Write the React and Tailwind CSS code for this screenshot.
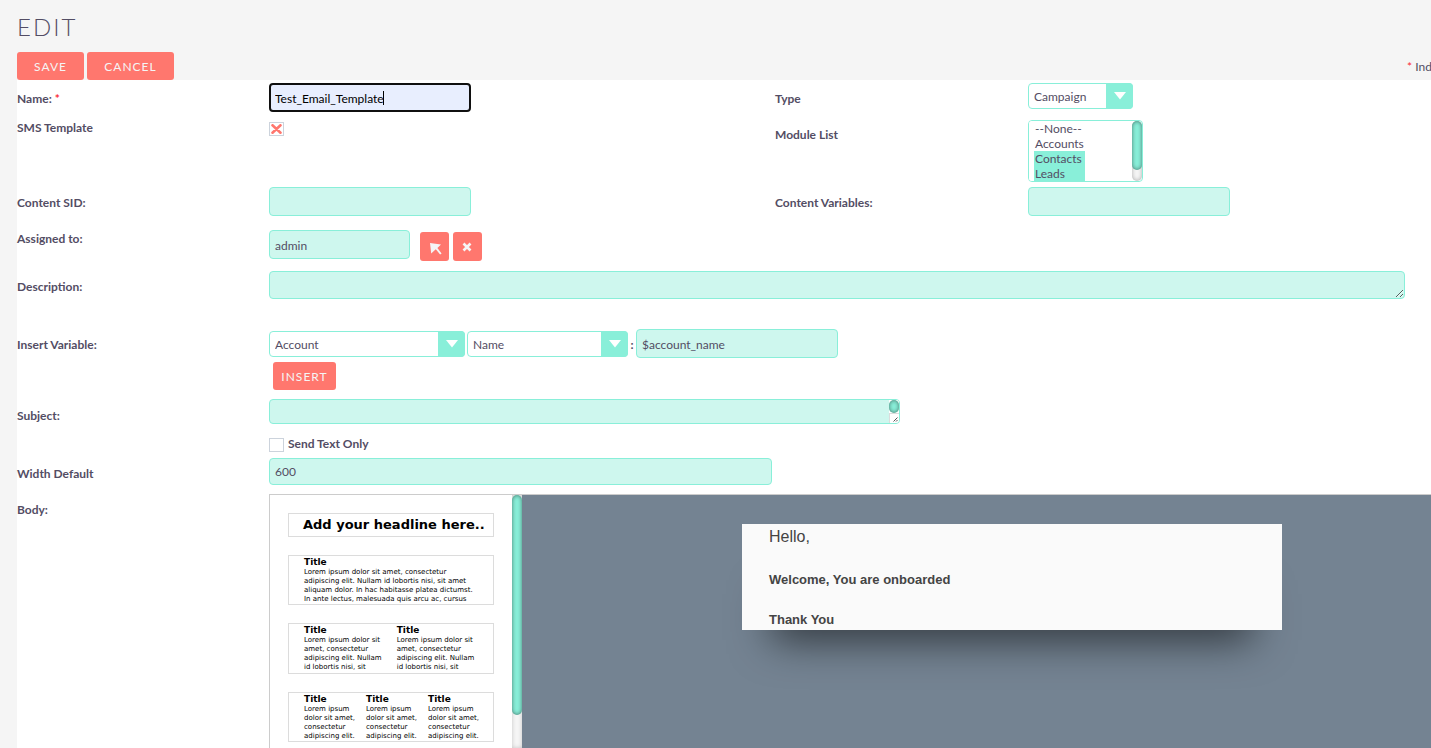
import { useState } from 'react'

const font = "font-['Lato','Liberation_Sans',sans-serif]"
const fieldBase = 'block rounded-[4px] border border-[#89efd9] bg-[#cef7ee] px-[5px] text-xs text-[#534d64] outline-none'
const textField = `${fieldBase} h-[29px] pt-[2px]`

const lorem = {
  one: [
    'Lorem ipsum dolor sit amet, consectetur',
    'adipiscing elit. Nullam id lobortis nisi, sit amet',
    'aliquam dolor. In hac habitasse platea dictumst.',
    'In ante lectus, malesuada quis arcu ac, cursus',
  ],
  two: ['Lorem ipsum dolor sit', 'amet, consectetur', 'adipiscing elit. Nullam', 'id lobortis nisi, sit'],
  three: ['Lorem ipsum', 'dolor sit amet,', 'consectetur', 'adipiscing elit.'],
}

/* ── Form helpers ── */
function Label({ htmlFor, children, className = 'pt-[9px]' }) {
  return (
    <label htmlFor={htmlFor} className={`w-[252px] shrink-0 text-xs leading-5 font-bold ${className}`}>
      {children}
    </label>
  )
}

function Arrow() {
  return (
    <span className="pointer-events-none absolute inset-y-0 right-0 flex w-[27px] justify-center rounded-r-[4px] bg-[#89efd9] pt-[9px]">
      <svg width="12" height="8" viewBox="0 0 12 8" fill="#fff">
        <path d="M0 0h12L6 7.5z" />
      </svg>
    </span>
  )
}

function Select({ id, label, options, className }) {
  return (
    <div className={`relative self-start ${className}`}>
      <select
        id={id}
        aria-label={label}
        className="block h-[26px] w-full appearance-none rounded-[4px] border border-[#89efd9] bg-white pt-[2px] pr-7 pl-[5px] text-xs text-[#534d64] outline-none"
      >
        {options.map(o => <option key={o}>{o}</option>)}
      </select>
      <Arrow />
    </div>
  )
}

function Button({ children, className }) {
  return (
    <button
      type="button"
      className={`h-7 rounded-[3px] bg-[#ff776e] pt-[2px] text-xs tracking-[1px] text-[#f5f5f5] ${className}`}
    >
      {children}
    </button>
  )
}

function Thumb({ className }) {
  return (
    <div className={`rounded-full bg-[#89efd9] shadow-[inset_0_0_4px_rgba(0,0,0,0.5)] ${className}`} />
  )
}

/* ── Body editor ── */
function Block({ columns, lines, className }) {
  return (
    <div className={`flex shrink-0 border border-[#dcdcdc] pl-[15px] ${className}`}>
      {Array.from({ length: columns }, (_, i) => (
        <div key={i} className="whitespace-nowrap">
          <p className="pt-px text-[9px] leading-[11px] font-bold">Title</p>
          {lines.map(l => <p key={l} className="text-[7px] leading-[9px]">{l}</p>)}
        </div>
      ))}
    </div>
  )
}

function Editor() {
  return (
    <div className="flex min-w-0 flex-1 border-t border-l border-[#cccccc]">
      <div className="flex w-[242px] shrink-0 flex-col gap-[18px] overflow-hidden px-[18px] pt-[18px] font-['DejaVu_Sans',sans-serif] text-black">
        <div className="h-6 shrink-0 border border-[#dcdcdc] pl-[14px] text-[13px] leading-[22px] font-bold whitespace-nowrap">
          Add your headline here..
        </div>
        <Block columns={1} lines={lorem.one} className="h-[50px]" />
        <Block columns={2} lines={lorem.two} className="h-[51px] gap-[15px]" />
        <Block columns={3} lines={lorem.three} className="h-[50px] gap-[11px]" />
      </div>
      <div className="w-[10px] shrink-0 bg-[#f5f5f5] shadow-[inset_0_0_4px_rgba(0,0,0,0.2)]">
        <Thumb className="h-[220px]" />
      </div>
      <div className="flex flex-1 items-start justify-center bg-[#748392] pt-[29px] pl-[71px]">
        <div className="w-[540px] bg-[#fafafa] pl-[27px] font-['Liberation_Sans',Arial,sans-serif] text-[#444] shadow-[0_40px_42px_-30px_rgba(0,0,0,0.6)]">
          <p className="pt-px text-base leading-6">Hello,</p>
          <p className="pt-[21px] text-[13px] leading-5 font-bold">Welcome, You are onboarded</p>
          <p className="pt-5 text-[13px] leading-5 font-bold">Thank You</p>
        </div>
      </div>
    </div>
  )
}

export default function App() {
  const [name, setName] = useState('Test_Email_Template')
  const [sms, setSms] = useState(true)
  const [modules, setModules] = useState(['Contacts', 'Leads'])

  return (
    <div className={`flex h-screen flex-col overflow-hidden bg-[#f5f5f5] pl-[17px] text-[#534d64] ${font}`}>
      {/* Title and actions */}
      <header className="h-20 shrink-0">
        <h1 className="pt-[11px] text-2xl leading-8 font-light tracking-[2px]">EDIT</h1>
        <div className="flex items-center gap-[3px] pt-[9px]">
          <Button className="w-[67px]">SAVE</Button>
          <Button className="w-[87px]">CANCEL</Button>
          <p className="ml-auto w-6 overflow-hidden pt-[2px] text-xs whitespace-nowrap">
            <span className="text-red-500">*</span> Indicates required field
          </p>
        </div>
      </header>

      <form className="flex flex-1 flex-col bg-white">
        <div className="flex h-9 shrink-0">
          <div className="flex w-[758px]">
            <Label htmlFor="name">Name: <span className="text-red-500">*</span></Label>
            <div className="relative mt-[3px] h-[29px]">
              <input
                id="name"
                value={name}
                onChange={e => setName(e.target.value)}
                className="block h-[29px] w-[202px] rounded-[4px] border-2 border-[#101010] bg-[#e8eefe] px-1 pt-[2px] text-xs text-black outline-none"
              />
              <span className="absolute top-[8px] left-[114px] h-[14px] w-px bg-black" />
            </div>
          </div>
          <Label htmlFor="type">Type</Label>
          <Select id="type" options={['Campaign', 'Email', 'System']} className="mt-[3px] ml-px w-[105px]" />
        </div>

        <div className="flex h-[68px] shrink-0">
          <div className="flex w-[758px]">
            <Label htmlFor="sms" className="pt-[2px]">SMS Template</Label>
            <div className="relative mt-[6px] h-[14px] w-[15px]">
              <input
                id="sms"
                type="checkbox"
                checked={sms}
                onChange={() => setSms(!sms)}
                className="block h-[14px] w-[15px] appearance-none border border-[#ccd3dc] bg-white"
              />
              {sms && (
                <svg className="pointer-events-none absolute top-[2px] left-[2px]" width="11" height="10" viewBox="0 0 11 10" stroke="#ff776e" strokeWidth="2.6" strokeLinecap="round">
                  <path d="M1.5 1.3l8 7.4M9.5 1.3l-8 7.4" />
                </svg>
              )}
            </div>
          </div>
          <Label htmlFor="modules">Module List</Label>
          <div className="mt-1 ml-px flex h-[62px] w-[115px] overflow-hidden rounded-[4px] border border-[#89efd9]">
            <select
              id="modules"
              multiple
              size={4}
              value={modules}
              onChange={e => setModules([...e.target.selectedOptions].map(o => o.value))}
              className="h-[60px] w-[103px] appearance-none overflow-hidden bg-white pr-[47px] pl-[5px] text-xs text-[#534d64] outline-none"
            >
              {['--None--', 'Accounts', 'Contacts', 'Leads'].map(o => (
                <option
                  key={o}
                  className="h-[15px] px-px py-0 leading-[15px] [-webkit-text-fill-color:#534d64] checked:bg-[#89efd9] checked:bg-[linear-gradient(#89efd9,#89efd9)]"
                >
                  {o}
                </option>
              ))}
            </select>
            <div className="w-[10px] rounded-full bg-[#f5f5f5] shadow-[inset_0_0_4px_rgba(0,0,0,0.3)]">
              <Thumb className="h-[49px]" />
            </div>
          </div>
        </div>

        <div className="flex h-9 shrink-0">
          <div className="flex w-[758px]">
            <Label htmlFor="sid">Content SID:</Label>
            <input id="sid" className={`${textField} mt-[3px] w-[202px]`} />
          </div>
          <Label htmlFor="vars">Content Variables:</Label>
          <input id="vars" className={`${textField} mt-[3px] ml-px w-[202px]`} />
        </div>

        <div className="flex h-12 shrink-0">
          <Label htmlFor="assigned">Assigned to:</Label>
          <input id="assigned" defaultValue="admin" className={`${textField} mt-[10px] w-[141px]`} />
          <div className="flex gap-1 pt-3 pl-[10px]">
            <button type="button" aria-label="Select user" className="size-[29px] rounded-[3px] bg-[#ff776e]">
              <svg width="29" height="29" viewBox="0 0 29 29" fill="#f5f5f5">
                <path d="M10 11l11 1.600-3.600 3.400 4.200 5.400-1.500 1.200-4.300-5.300-4.600 4.200z" />
              </svg>
            </button>
            <button type="button" aria-label="Clear user" className="size-[29px] rounded-[3px] bg-[#ff776e]">
              <svg width="29" height="29" viewBox="0 0 29 29" stroke="#f5f5f5" strokeWidth="2.600">
                <path d="M10.500 11.500l7 7M17.500 11.500l-7 7" />
              </svg>
            </button>
          </div>
        </div>

        <div className="flex h-[58px] shrink-0 pr-[26px]">
          <Label htmlFor="description">Description:</Label>
          <textarea id="description" rows={1} className={`${fieldBase} mt-[3px] h-7 flex-1 resize`} />
        </div>

        <div className="flex h-[70px] shrink-0">
          <Label htmlFor="module">Insert Variable:</Label>
          <div>
            <div className="flex items-center pt-[3px]">
              <Select id="module" options={['Account', 'Contact', 'Lead']} className="mt-[2px] w-[196px]" />
              <Select label="Variable" options={['Name', 'Phone', 'Website']} className="mt-[2px] ml-[2px] w-[161px]" />
              <span className="w-2 pt-[2px] text-center text-xs font-bold">:</span>
              <input aria-label="Variable code" defaultValue="$account_name" className={`${textField} w-[202px]`} />
            </div>
            <Button className="mt-1 ml-1 w-[63px]">INSERT</Button>
          </div>
        </div>

        <div className="flex h-[38px] shrink-0">
          <Label htmlFor="subject" className="pt-[10px]">Subject:</Label>
          <div className="mt-[3px] flex h-[25px] w-[631px] overflow-hidden rounded-[4px] border border-[#89efd9] bg-[#cef7ee]">
            <textarea id="subject" rows={1} className="h-[23px] flex-1 resize-none overflow-hidden px-[5px] text-xs outline-none" />
            <div className="w-[10px] bg-white">
              <Thumb className="h-[13px]" />
              <svg width="10" height="10" viewBox="0 0 10 10" fill="none" stroke="#555">
                <path d="M0 .5h10M.5 0v10" stroke="#dcdcdc" />
                <path d="M4.500 8.500l4-4M7 8.500l1.500-1.500" />
              </svg>
            </div>
          </div>
        </div>

        <div className="flex h-[21px] shrink-0 pl-[252px]">
          <input id="textonly" type="checkbox" className="mt-1 block h-[14px] w-[15px] appearance-none border border-[#ccd3dc] bg-white" />
          <label htmlFor="textonly" className="pl-1 text-xs leading-5 font-bold">Send Text Only</label>
        </div>

        <div className="flex h-9 shrink-0">
          <Label htmlFor="width">Width Default</Label>
          <input id="width" defaultValue="600" className={`${fieldBase} mt-[3px] h-[27px] w-[503px]`} />
        </div>

        <div className="flex flex-1 pt-[3px]">
          <span className="w-[252px] shrink-0 pt-[6px] text-xs leading-5 font-bold">Body:</span>
          <Editor />
        </div>
      </form>
    </div>
  )
}
